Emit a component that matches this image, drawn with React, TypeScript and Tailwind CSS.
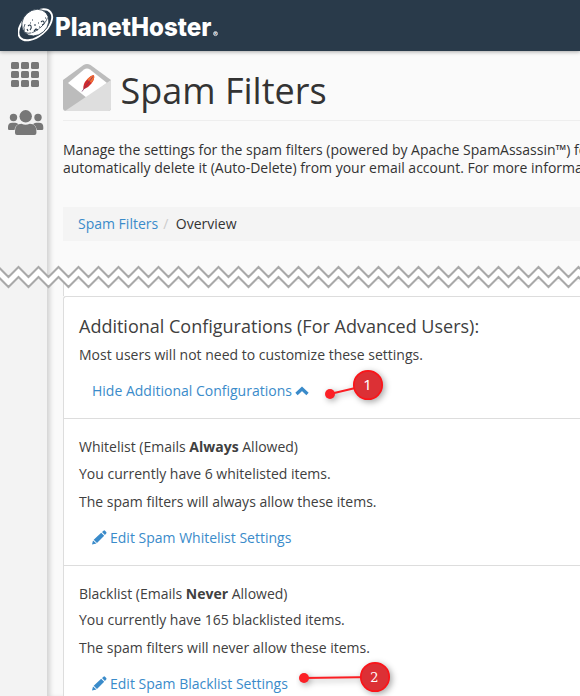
import React from "react";

function PlanetLogo() {
  return (
    <svg width="204" height="40" viewBox="0 0 204 40" role="img" aria-label="PlanetHoster">
      <ellipse cx="17.300" cy="18.800" rx="19.800" ry="11.500" transform="rotate(-40 17.300 18.800)" fill="#293a4a" stroke="#fff" strokeWidth="1.900" />
      <ellipse cx="17.300" cy="16.600" rx="14.500" ry="12.300" transform="rotate(-42 17.300 16.600)" fill="#fff" stroke="#293a4a" strokeWidth=".8" />
      <path d="M7 18Q4.500 23 7.500 26.500 12 29 20 23.500 28 17.500 29.500 11.500" fill="none" stroke="#293a4a" strokeWidth=".8" strokeDasharray="7 1" />
      <path d="M10 20q2-2 3 0t-1 4M12 17h1M9 23l1 2M16 19h2M16 25l2-2 2 1M23 16q2-2 3 0t-2 3M20 17h1M14 14h1M27 12h1M21 21h1" fill="none" stroke="#293a4a" strokeWidth="1.100" />
      <text x="37" y="29.500" textLength="156.500" lengthAdjust="spacingAndGlyphs" fill="#fff" fontFamily="Inter, sans-serif" fontSize="26" fontWeight="800">PlanetHoster</text>
      <circle cx="197.500" cy="27.600" r="2" fill="none" stroke="#fff" strokeWidth=".7" />
      <text x="197.500" y="28.800" textAnchor="middle" fill="#fff" fontFamily="'Liberation Sans', sans-serif" fontSize="3.500" fontWeight="700">R</text>
    </svg>
  );
}

function GridIcon() {
  return (
    <div className="grid grid-cols-3 gap-[2px]">
      {Array.from({ length: 9 }, (_, i) => (
        <span key={i} className="h-[7px] w-2 rounded-[1.500px] bg-[#777]" />
      ))}
    </div>
  );
}

function UsersIcon() {
  return (
    <svg width="36" height="26" viewBox="0 0 36 26" fill="#777">
      <circle cx="5.500" cy="7.500" r="3.700" />
      <circle cx="30" cy="7.500" r="3.700" />
      <path d="M0 19v-2q0-4.300 4.300-4.300h3q2 0 3 1.500Q7 16 6.500 20H1.300Q0 20 0 19Z" />
      <path d="M35.300 19v-2q0-4.300-4.300-4.300h-3q-2 0-3 1.500Q28.300 16 28.800 20H34q1.300 0 1.300-1Z" />
      <circle cx="17.700" cy="6.300" r="6.800" fill="#f3f3f3" />
      <circle cx="17.700" cy="6.300" r="6.200" />
      <path d="M7 23v-2q0-7 6.500-7.300 4 2 8.300 0Q28.400 14 28.400 21v2q0 2-2 2H9q-2 0-2-2Z" />
    </svg>
  );
}

function MailIcon() {
  return (
    <svg width="48" height="47" viewBox="0 0 48 47">
      <path d="M0 16L20.500 1q3.500-2 7 0L48 16v28q0 3-3 3H3q-3 0-3-3Z" fill="#bcbcbc" />
      <path d="M5 19L21 5.500q3-2 6 0L44 19 24 34Z" fill="#fff" />
      <path d="M48 16v28q0 3-3 3H2Z" fill="#dedede" />
      <path d="M20.500 25.500Q19.500 20 24 15.500 28 11 31 11.200 32 15 28.500 19.500 25 24 20.500 25.500Z" fill="#d12a2d" />
      <path d="M24 15.500Q28 11 31 11.200 32 15 28.500 19Z" fill="#f26c35" />
      <path d="M19 27.500L24 20.500 30 12.500" fill="none" stroke="#783364" strokeWidth=".7" />
    </svg>
  );
}

function ChevronUp() {
  return (
    <svg width="14" height="10" viewBox="0 0 14 10">
      <path d="M1.500 8L7 2.700 12.500 8" fill="none" stroke="#3a8bca" strokeWidth="3.300" />
    </svg>
  );
}

function Pencil() {
  return (
    <svg className="-mt-[2px]" width="15" height="15" viewBox="0 0 15 15" fill="#3a8bca">
      <path d="M0 14.500L1 10.500 4.500 13.500ZM1.700 9.700L9.200 2.700 12.200 5.700 5 13ZM10 2L11.500.7Q12.300 0 13 .7L14.200 1.900Q14.900 2.700 14.200 3.400L12.900 4.900Z" />
    </svg>
  );
}

const wave =
  "M-11.500 277" +
  Array.from({ length: 30 }, (_, i) => `L${i * 20 - 1.5} 267L${i * 20 + 8.5} 277`).join("");

function TornEdge() {
  return (
    <svg className="pointer-events-none absolute left-0 top-[260px]" width="580" height="30" viewBox="0 260 580 30" fill="none">
      <path d={wave} stroke="#fff" strokeWidth="7.500" transform="translate(0 5)" />
      <path d={wave} stroke="#a9a9a9" strokeWidth="2" />
      <path d={wave} stroke="#a9a9a9" strokeWidth="2" transform="translate(0 10)" />
    </svg>
  );
}

function Marker({ n, className, dy }: { n: number; className: string; dy: number }) {
  return (
    <svg className={"absolute " + className} width="110" height="44" viewBox="0 0 110 44">
      <g className="drop-shadow-[2px_2px_3px_rgba(0,0,0,0.35)]">
        <path d={`M8 ${dy}L${n === 1 ? 46 : 79} 20`} stroke="#fb1e23" strokeWidth="2" />
        <circle cx="8" cy={dy} r="5" fill="#fb2026" />
        <circle cx={n === 1 ? 46 : 79} cy="20" r="14.200" fill="#dc3035" stroke="#fb1419" strokeWidth="1.700" />
      </g>
      <text x={n === 1 ? 45.5 : 78.5} y="25" textAnchor="middle" fill="#fff" fontFamily={n === 1 ? "'Noto Sans', sans-serif" : "'DejaVu Serif', serif"} fontSize={n === 1 ? 15 : 13}>{n}</text>
    </svg>
  );
}

type RuleProps = { name: string; when: string; count: string; verb: string; gap: string };

function RuleSection({ name, when, count, verb, gap }: RuleProps) {
  return (
    <section className="h-[147px] border-b border-[#ddd] pl-[15px] pt-[18px]">
      <p>{name} (Emails <b>{when}</b> Allowed)</p>
      <p className={gap}>You currently have {count} {name.toLowerCase()}ed items.</p>
      <p className="mt-2">The spam filters will {verb} allow these items.</p>
      <a className="ml-[13px] mt-4 flex items-center gap-[3px] text-[#3a8bca]">
        <Pencil />
        Edit Spam {name} Settings
      </a>
    </section>
  );
}

export default function App() {
  return (
    <div className="relative flex h-[696px] w-[580px] flex-col overflow-hidden bg-[#fafafa] font-['Open_Sans',sans-serif] text-[14px] leading-5 text-[#333]">
      <header className="z-10 flex h-[51px] shrink-0 items-start bg-[#293a4a] pl-[18px] pt-[6px] shadow-[0_1px_4px_rgba(0,0,0,0.3)]">
        <PlanetLogo />
      </header>
      <div className="flex min-h-0 flex-1">
        <nav className="flex w-[47px] shrink-0 flex-col items-start bg-[#f3f3f3] pl-2 pt-[11px]">
          <div className="pl-[3px]"><GridIcon /></div>
          <div className="mt-[23px]"><UsersIcon /></div>
        </nav>
        <main className="min-w-0 flex-1 overflow-hidden bg-[#fafafa] pl-4 shadow-[inset_5px_0_5px_-2px_rgba(0,0,0,0.16)]">
          <div className="flex h-[70px] items-start border-b border-[#eee] pt-[13px]">
            <MailIcon />
            <h1 className="ml-[9.500px] mt-[3px] whitespace-nowrap text-[36px] leading-[48px]">Spam Filters</h1>
          </div>
          <div className="mt-[20px] whitespace-nowrap leading-[18px]">
            <p>Manage the settings for the spam filters (powered by Apache SpamAssassin™) for your</p>
            <p>automatically delete it (Auto-Delete) from your email account. For more information</p>
          </div>
          <div className="mt-[30px] flex h-[34px] items-center bg-[#f4f4f4] pl-[15px]">
            <a className="text-[#3a8bca]">Spam Filters</a>
            <span className="px-[5px] text-[#ccc]">/</span>
            <span className="pl-[2.500px]">Overview</span>
          </div>
          <div className="mt-[41px] h-[14px] border-l border-[#ddd] bg-white" />
          <div className="rounded-tl-[3px] border-l border-t border-[#ddd] bg-white text-[#404040]">
            <section className="h-[122px] border-b border-[#ddd] pl-[15px] pt-[19px]">
              <h2 className="text-[18px]">Additional Configurations (For Advanced Users):</h2>
              <p className="mt-[9px]">Most users will not need to customize these settings.</p>
              <a className="ml-[13px] mt-4 flex items-center gap-[3px] text-[#3a8bca]">
                Hide Additional Configurations
                <ChevronUp />
              </a>
            </section>
            <RuleSection name="Whitelist" when="Always" count="6" verb="always" gap="mt-[7px]" />
            <RuleSection name="Blacklist" when="Never" count="165" verb="never" gap="mt-[6px]" />
          </div>
        </main>
      </div>
      <TornEdge />
      <Marker n={1} className="left-[322px] top-[365px]" dy={29} />
      <Marker n={2} className="left-[296px] top-[657px]" dy={21} />
    </div>
  );
}
